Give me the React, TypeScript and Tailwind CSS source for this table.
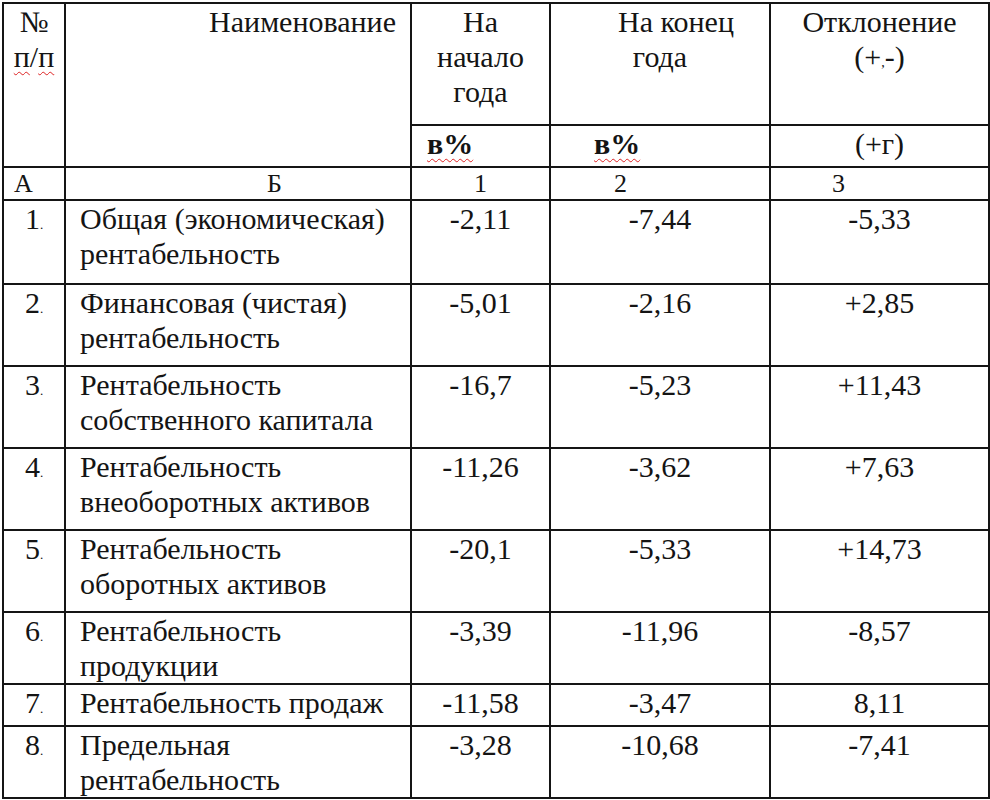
const rows = [
  { n: '1', name: ['Общая (экономическая)', 'рентабельность'], a: '-2,11', b: '-7,44', c: '-5,33', h: 'h-[84px]' },
  { n: '2', name: ['Финансовая (чистая)', 'рентабельность'], a: '-5,01', b: '-2,16', c: '+2,85', h: 'h-[82px]' },
  { n: '3', name: ['Рентабельность', 'собственного капитала'], a: '-16,7', b: '-5,23', c: '+11,43', h: 'h-[82px]' },
  { n: '4', name: ['Рентабельность', 'внеоборотных активов'], a: '-11,26', b: '-3,62', c: '+7,63', h: 'h-[82px]' },
  { n: '5', name: ['Рентабельность', 'оборотных активов'], a: '-20,1', b: '-5,33', c: '+14,73', h: 'h-[82px]' },
  { n: '6', name: ['Рентабельность', 'продукции'], a: '-3,39', b: '-11,96', c: '-8,57', h: 'h-[70px]' },
  { n: '7', name: ['Рентабельность продаж'], a: '-11,58', b: '-3,47', c: '8,11', h: 'h-[42px]' },
  { n: '8', name: ['Предельная', 'рентабельность'], a: '-3,28', b: '-10,68', c: '-7,41', h: 'h-[70px]' },
]

const cell = "border-2 border-[#151515] align-top p-0 font-['Liberation_Serif',serif] text-[30px] leading-[35px]"
const small = "border-2 border-[#151515] align-top p-0 font-['Liberation_Serif',serif] text-[26px] leading-[31px]"
const wavy = 'underline decoration-wavy decoration-[#d22] decoration-1 underline-offset-4'

export default function App() {
  return (
    <div className="w-[990px] h-[800px] bg-white pl-[2px] pt-[2px] text-[#141414] font-['Liberation_Serif',serif] text-[30px] leading-[35px]">
      <table className="table-fixed border-collapse w-[986px]">
        <colgroup>
          <col className="w-[62px]" />
          <col className="w-[346px]" />
          <col className="w-[139px]" />
          <col className="w-[220px]" />
          <col className="w-[219px]" />
        </colgroup>
        <tbody>
          {/* header */}
          <tr className="h-[122px]">
            <td rowSpan={2} className={`${cell} text-center`}>
              <div>№</div>
              <div><span className={wavy}>п</span>/<span className={wavy}>п</span></div>
            </td>
            <td rowSpan={2} className={`${cell} text-right pr-[14px]`}>Наименование</td>
            <td className={`${cell} text-center`}>
              <div>На</div>
              <div>начало</div>
              <div>года</div>
            </td>
            <td className={`${cell} text-center`}>
              <div className="pl-8">На конец</div>
              <div>года</div>
            </td>
            <td className={`${cell} text-center`}>
              <div>Отклонение</div>
              <div>(+<span className="text-[14px]">,</span>-)</div>
            </td>
          </tr>
          <tr className="h-[42px]">
            <td className={`${cell} pl-[15px]`}>
              <span className={`${wavy} font-bold`}>в%</span>
            </td>
            <td className={`${cell} pl-[43px]`}>
              <span className={`${wavy} font-bold`}>в%</span>
            </td>
            <td className={`${cell} text-center`}>(+г)</td>
          </tr>
          <tr className="h-[33px]">
            <td className={`${small} pl-[10px]`}>А</td>
            <td className={`${small} pl-[201px]`}>Б</td>
            <td className={`${small} text-center`}>1</td>
            <td className={`${small} pl-[63px]`}>2</td>
            <td className={`${small} pl-[61px]`}>3</td>
          </tr>
          {rows.map((r) => (
            <tr key={r.n} className={r.h}>
              <td className={`${cell} text-center`}>
                {r.n}<span className="text-[13px] leading-none">.</span>
              </td>
              <td className={`${cell} pl-[14px]`}>
                {r.name.map((line) => (
                  <div key={line}>{line}</div>
                ))}
              </td>
              <td className={`${cell} text-center`}>{r.a}</td>
              <td className={`${cell} text-center`}>{r.b}</td>
              <td className={`${cell} text-center`}>{r.c}</td>
            </tr>
          ))}
        </tbody>
      </table>
    </div>
  )
}
